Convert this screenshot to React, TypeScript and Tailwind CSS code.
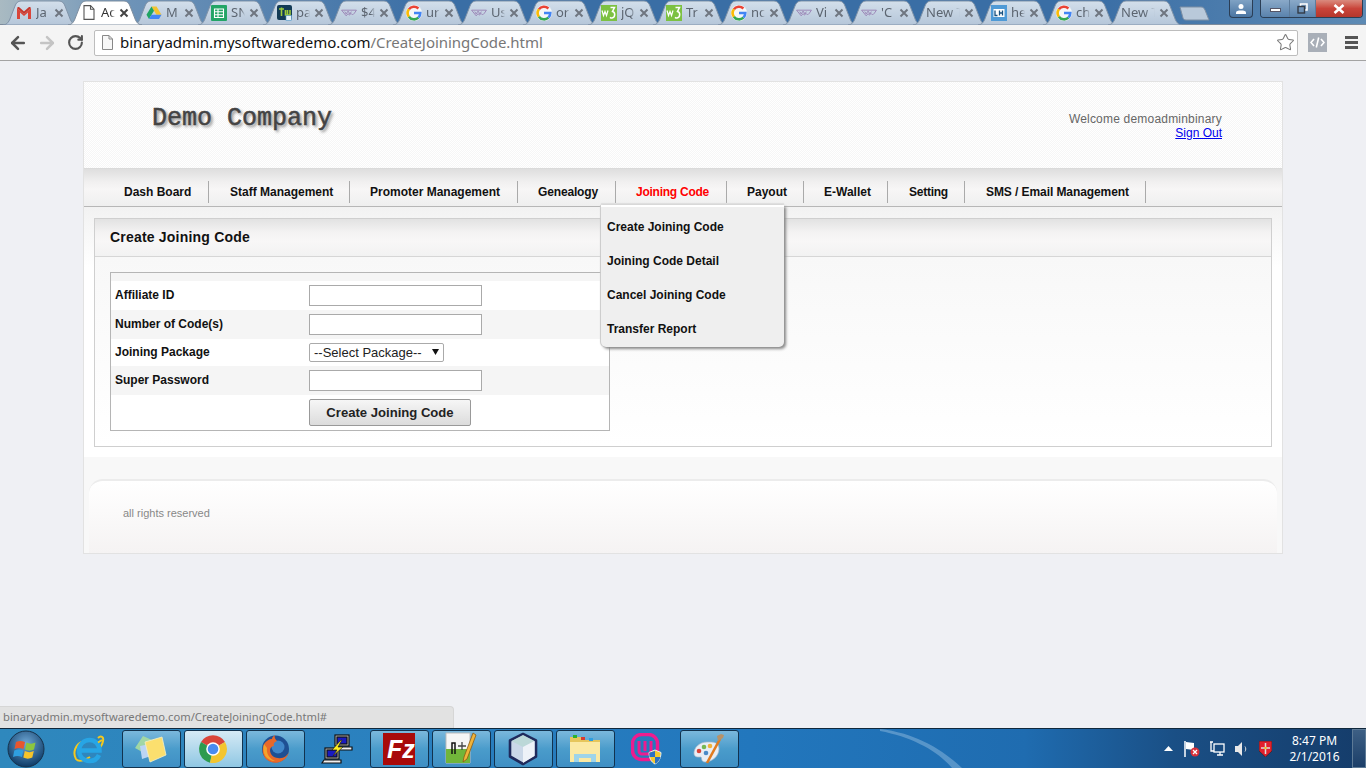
import React from "react";
import { ArrowLeft, ArrowRight, RotateCw, Star } from "lucide-react";

const sans = "font-['Liberation_Sans',Arial,sans-serif]";
const ui = "font-['Noto_Sans',sans-serif]";

// favicons of the browser tabs
function Favicon({ kind }: { kind: string }) {
  if (kind === "gmail")
    return (
      <svg width="16" height="14" viewBox="0 0 16 14">
        <path d="M1 13V2l7 6 7-6v11h-3V6.500L8 10 4 6.500V13z" fill="#d9453a" />
        <path d="M1 2l1-1h1l5 4.500L13 1h1l1 1-7 6z" fill="#c5352b" />
      </svg>
    );
  if (kind === "doc")
    return (
      <svg width="12" height="15" viewBox="0 0 12 15" fill="#fff" stroke="#555" strokeWidth="1.100">
        <path d="M1 .6h6.500L11 4.200v10.200H1z" />
        <path d="M7.500.6v3.600H11" fill="none" />
      </svg>
    );
  if (kind === "drive")
    return (
      <svg width="17" height="15" viewBox="0 0 17 15">
        <path d="M5.800 1h5.400l5.300 9h-5.400z" fill="#f4c32e" />
        <path d="M5.800 1l2.700 4.600L3.200 14.500.5 10z" fill="#1fa463" />
        <path d="M3.200 14.500l2.700-4.500h10.600l-2.700 4.500z" fill="#4286f5" />
      </svg>
    );
  if (kind === "sheets")
    return (
      <svg width="16" height="16" viewBox="0 0 16 16">
        <rect width="16" height="16" rx="1" fill="#23a566" />
        <path d="M3.500 4h9v8.500h-9zM3.500 6.800h9M3.500 9.700h9M7 4v8.500" fill="none" stroke="#fff" strokeWidth="1.100" />
      </svg>
    );
  if (kind === "tw")
    return (
      <svg width="15" height="16" viewBox="0 0 15 16">
        <rect width="15" height="15" rx="2" fill="#123a55" />
        <path d="M2 4h5M4.500 2.500V11M8.500 5v5h2V5m0 5h2.500V5" fill="none" stroke="#9ccb3b" strokeWidth="1.600" />
        <rect x="9" y="10.500" width="5.500" height="5" fill="#e8f3f8" stroke="#4b93c4" strokeWidth=".6" />
      </svg>
    );
  if (kind === "woo")
    return (
      <svg width="17" height="8" viewBox="0 0 17 8" fill="none" stroke="#9a83b5" strokeWidth="1">
        <path d="M.6 1h15.800L14 4.500c-1 1.500-2.500 1.500-3.500 0-1 2-2 2-3 .2L5.500 7 .6 1z" />
        <path d="M4 2.500l1.500 2.500 2-3 2 3 1.500-2.500" />
      </svg>
    );
  if (kind === "google")
    return (
      <svg width="16" height="16" viewBox="0 0 16 16" fill="none" strokeWidth="2.600">
        <circle cx="8" cy="8" r="8" fill="#f4f6f8" stroke="none" />
        <path d="M12.400 3.500A6.300 6.300 0 0 0 2.900 4.300" stroke="#ea4335" />
        <path d="M2.900 4.300a6.300 6.300 0 0 0 0 7.400" stroke="#fbbc05" />
        <path d="M2.900 11.700a6.300 6.300 0 0 0 9.500.9" stroke="#34a853" />
        <path d="M12.400 12.600A6.300 6.300 0 0 0 14.300 8H8" stroke="#4285f4" />
      </svg>
    );
  if (kind === "w3")
    return (
      <svg width="16" height="16" viewBox="0 0 16 16">
        <rect width="16" height="16" fill="#7cc142" />
        <path d="M1 5.500l1.500 5 1.500-4 1.500 4 1.500-5" fill="none" stroke="#fff" strokeWidth="1.200" />
        <path d="M9.500 2.500h4l-2 4c3 .5 3 6-.5 6.500-1 0-1.500-.3-2-.7" fill="none" stroke="#fff" strokeWidth="1.500" />
      </svg>
    );
  if (kind === "lh")
    return (
      <svg width="16" height="16" viewBox="0 0 16 16">
        <rect width="16" height="16" fill="#4f9ad6" />
        <rect x="2.500" y="4" width="11" height="8" fill="#fff" />
        <path d="M4 5.500V10.500H6.500M8.500 5.500v5M11.500 5.500v5M8.500 8h3" fill="none" stroke="#17507f" strokeWidth="1.300" />
      </svg>
    );
  return null;
}

const tabs = [
  { icon: "gmail", label: "Ja" },
  { icon: "doc", label: "Ac", active: true },
  { icon: "drive", label: "M" },
  { icon: "sheets", label: "SN" },
  { icon: "tw", label: "pa" },
  { icon: "woo", label: "$4" },
  { icon: "google", label: "ur" },
  { icon: "woo", label: "Us" },
  { icon: "google", label: "or" },
  { icon: "w3", label: "jQ" },
  { icon: "w3", label: "Tr" },
  { icon: "google", label: "nc" },
  { icon: "woo", label: "Vi" },
  { icon: "woo", label: "'C" },
  { icon: "", label: "New T" },
  { icon: "lh", label: "he" },
  { icon: "google", label: "ch" },
  { icon: "", label: "New T" },
];

function BrowserTab({ icon, label, active }: { icon: string; label: string; active?: boolean }) {
  return (
    <div className={`relative h-[24px] w-[74px] shrink-0 -mr-[9px] ${active ? "z-10" : ""}`}>
      <svg className="absolute inset-0" width="74" height="25" viewBox="0 0 74 25">
        <defs>
          <linearGradient id="tabFill" x1="0" y1="0" x2="0" y2="1">
            <stop offset="0" stopColor="#d3dfeb" />
            <stop offset="1" stopColor="#b5c6d9" />
          </linearGradient>
        </defs>
        <path
          d="M0 25C3 25 5 23 6.500 20L12 6C13 3 15 1 18 1H56C59 1 61 3 62 6L67.500 20C69 23 71 25 74 25Z"
          fill={active ? "#ffffff" : "url(#tabFill)"}
          stroke={active ? "#7f8fa0" : "#8093a8"}
        />
      </svg>
      <div className="relative flex h-full items-center pt-[1px]">
        {icon ? (
          <span className="flex w-[26px] shrink-0 justify-end">
            <span className="flex w-[16px] translate-x-[3px] justify-center">
              <Favicon kind={icon} />
            </span>
          </span>
        ) : (
          <span className="w-[13px] shrink-0" />
        )}
        <span
          className={`${icon ? "ml-[7px] w-[14px]" : "w-[34px]"} overflow-hidden whitespace-nowrap text-[13px] [mask-image:linear-gradient(90deg,#000_70%,transparent)] ${
            active ? "text-[#333]" : "text-[#5c6570]"
          } ${ui}`}
        >
          {label}
        </span>
        <svg className="absolute left-[51px] top-[8px]" width="10" height="10" viewBox="0 0 10 10">
          <path d="M1.500 1.500l7 7m0-7l-7 7" stroke={active ? "#444" : "#6f7680"} strokeWidth="2" />
        </svg>
      </div>
    </div>
  );
}

function WindowControls() {
  return (
    <div className="flex items-start pr-[3px]">
      <div className="mr-[7px] flex h-[18px] w-[24px] items-center justify-center rounded-b-[4px] border border-t-0 border-[#2b3e55] bg-gradient-to-b from-[#7fa2c4] to-[#4a75a2]">
        <svg width="12" height="12" viewBox="0 0 12 12" fill="#fff">
          <circle cx="6" cy="3.500" r="2.500" />
          <path d="M1 11V9.500C1 8 3 7.500 6 7.500s5 .5 5 2V11z" />
        </svg>
      </div>
      <div className="flex h-[18px] overflow-hidden rounded-b-[4px] border border-t-0 border-[#2b3e55]">
        <div className="flex w-[29px] items-center justify-center border-r border-[#5d7c9c] bg-gradient-to-b from-[#8aa9c8] to-[#5a83ad]">
          <div className="mt-[3px] h-[4px] w-[11px] border border-[#556] bg-white" />
        </div>
        <div className="flex w-[26px] items-center justify-center border-r border-[#5d7c9c] bg-gradient-to-b from-[#8aa9c8] to-[#5a83ad]">
          <svg width="11" height="11" viewBox="0 0 11 11" fill="none" stroke="#fff" strokeWidth="1.600">
            <path d="M3.500 3V1h6.500v6H8" />
            <rect x="1" y="3.500" width="6.500" height="6.500" stroke="#333b47" strokeWidth="1.400" />
          </svg>
        </div>
        <div className="flex w-[46px] items-center justify-center bg-gradient-to-b from-[#d98a7e] via-[#c9443a] to-[#b5372c]">
          <svg width="12" height="10" viewBox="0 0 12 10">
            <path d="M1.500 1l9 8m0-8l-9 8" stroke="#fff" strokeWidth="2.600" />
          </svg>
        </div>
      </div>
    </div>
  );
}

function BrowserChrome() {
  return (
    <div className="shrink-0">
      <div className="flex h-[25px] border-b border-[#7d8b9b] bg-[linear-gradient(90deg,#a9bac2_0%,#6f94b8_9%,#3a6ea5_32%,#3a6ea5_80%,#5d8ab4_100%)]">
        <div className="flex pl-[3px]">
          {tabs.map((t, i) => (
            <BrowserTab key={i} icon={t.icon} label={t.label} active={t.active} />
          ))}
        </div>
        <svg className="ml-[6px] mt-[6px] shrink-0" width="31" height="15" viewBox="0 0 31 15">
          <path d="M1 1H22C24 1 25 2 26 4L30 14H7C5 14 4.500 13 4 12z" fill="#b9c9da" stroke="#7d8fa4" />
        </svg>
        <div className="flex-1" />
        <WindowControls />
      </div>
      <div className="flex h-[36px] items-center border-b border-[#a3a3a3] bg-[#f4f4f4] pl-[3px]">
        <div className="flex w-[29px] justify-center">
          <ArrowLeft size={20} strokeWidth={3} color="#555" />
        </div>
        <div className="flex w-[29px] justify-center">
          <ArrowRight size={20} strokeWidth={3} color="#c4c4c4" />
        </div>
        <div className="flex w-[29px] justify-center">
          <RotateCw size={17} strokeWidth={3} color="#555" />
        </div>
        <div className="ml-[4px] flex h-[26px] w-[1204px] items-center rounded-[2px] border border-[#bdbdbd] bg-white pl-[7px] pr-[2px]">
          <svg width="11" height="15" viewBox="0 0 11 15" fill="#f7f7f7" stroke="#888">
            <path d="M.5.500h6.500L10.500 4v10.500H.5z" />
            <path d="M7 .5V4h3.500" fill="none" />
          </svg>
          <span className={`ml-[7px] text-[15px] leading-none tracking-[-0.04px] text-[#111] ${ui}`}>
            binaryadmin.mysoftwaredemo.com<span className="text-[#777]">/CreateJoiningCode.html</span>
          </span>
          <Star size={19} strokeWidth={1.300} color="#777" className="ml-auto" />
        </div>
        <div className="ml-[10px] flex h-[19px] w-[19px] items-center justify-center bg-[#a9afb8]">
          <svg width="15" height="11" viewBox="0 0 15 11" fill="none" stroke="#fff" strokeWidth="1.600">
            <path d="M4 2L1 5.500 4 9M11 2l3 3.500L11 9M8.700 .5L6.300 10.500" />
          </svg>
        </div>
        <div className="ml-[18px] flex w-[13px] flex-col gap-[2px]">
          <div className="h-[3px] bg-[#555]" />
          <div className="h-[3px] bg-[#555]" />
          <div className="h-[3px] bg-[#555]" />
        </div>
      </div>
    </div>
  );
}

const navItems = [
  { label: "Dash Board", box: "w-[106px] pl-[21px]" },
  { label: "Staff Management", box: "w-[141px] pl-[21px]" },
  { label: "Promoter Management", box: "w-[168px] pl-[20px]" },
  { label: "Genealogy", box: "w-[98px] pl-[20px] tracking-[-0.15px]" },
  { label: "Joining Code", box: "w-[111px] pl-[20px] tracking-[-0.25px]" },
  { label: "Payout", box: "w-[77px] pl-[20px]" },
  { label: "E-Wallet", box: "w-[84px] pl-[20px]" },
  { label: "Setting", box: "w-[77px] pl-[21px] tracking-[-0.25px]" },
  { label: "SMS / Email Management", box: "w-[181px] pl-[21px] tracking-[-0.08px]" },
];

const joiningMenu = ["Create Joining Code", "Joining Code Detail", "Cancel Joining Code", "Transfer Report"];

function NavBar() {
  return (
    <div className="flex h-[38px] items-end border-b border-[#b7b7b7] bg-[linear-gradient(180deg,#dedede_0%,#f1f0f0_35%,#f7f6f6_55%,#efefef_100%)] pb-[3px] pl-[19px]">
      {navItems.map((item) => (
        <div
          key={item.label}
          className={`relative flex h-[22px] items-center whitespace-nowrap border-r border-[#aaa] text-[12px] font-bold ${item.box} ${
            item.label === "Joining Code" ? "text-[#f00]" : "text-[#111]"
          }`}
        >
          {item.label}
          {item.label === "Joining Code" && <JoiningDropdown />}
        </div>
      ))}
    </div>
  );
}

function JoiningDropdown() {
  return (
    <div className="absolute left-[-15px] top-[24px] z-20 flex h-[142px] w-[183px] flex-col rounded-b-[5px] border-t-2 border-white bg-[#efefef] pt-[3px] tracking-normal text-[#111] shadow-[2px_2px_3px_#888,-1px_0_1px_#ccc,0_-2px_1px_#ddd]">
      {joiningMenu.map((m) => (
        <div key={m} className="flex h-[34px] items-center pl-[6px]">
          {m}
        </div>
      ))}
    </div>
  );
}

function FormRow({ label, shaded, children }: { label: string; shaded?: boolean; children: React.ReactNode }) {
  return (
    <div className={`flex h-[29px] items-center ${shaded ? "bg-[#f5f5f5]" : "bg-white"}`}>
      <div className="w-[198px] pb-[2px] pl-[4px] text-[12px] font-bold text-[#111]">{label}</div>
      {children}
    </div>
  );
}

function TextBox() {
  return <input className="h-[21px] w-[173px] border border-[#aaa] bg-white" />;
}

function JoiningForm() {
  return (
    <div className="w-[500px] border border-[#b5b5b5] bg-white">
      <div className="h-[8px] bg-[#f5f5f5]" />
      <FormRow label="Affiliate ID">
        <TextBox />
      </FormRow>
      <FormRow label="Number of Code(s)" shaded>
        <TextBox />
      </FormRow>
      <div className="flex h-[27px] items-center bg-white">
        <div className="w-[198px] pb-[2px] pl-[4px] text-[12px] font-bold text-[#111]">Joining Package</div>
        <div className="relative">
          <select className="block h-[19px] w-[135px] appearance-none rounded-[2px] border border-[#aaa] bg-white py-0 pl-[4px] text-[13px] leading-[17px] text-[#222]">
            <option>--Select Package--</option>
          </select>
          <svg className="absolute right-[5px] top-[6px]" width="7" height="6" viewBox="0 0 7 6">
            <path d="M0 0h7L3.500 6z" fill="#111" />
          </svg>
        </div>
      </div>
      <FormRow label="Super Password" shaded>
        <TextBox />
      </FormRow>
      <div className="flex h-[35px] items-start bg-white pt-[4px]">
        <div className="w-[198px]" />
        <button className="h-[27px] w-[162px] rounded-[2px] border border-[#999] bg-gradient-to-b from-[#f6f6f6] to-[#dcdcdc] text-[13.100px] font-bold text-[#222]">
          Create Joining Code
        </button>
      </div>
    </div>
  );
}

function Panel() {
  return (
    <div className="border border-[#cfcfcf] bg-white">
      <div className="flex h-[38px] items-center border-b border-[#d6d6d6] bg-[linear-gradient(180deg,#e2e2e2_0%,#f3f2f2_35%,#f8f7f7_60%,#f2f2f2_100%)] pl-[15px] text-[14px] font-bold tracking-[0.2px] text-[#111]">
        Create Joining Code
      </div>
      <div className="bg-gradient-to-b from-[#f8f8f8] to-white p-[15px]">
        <JoiningForm />
      </div>
    </div>
  );
}

function SitePage() {
  return (
    <div className={`mx-auto h-[473px] w-[1200px] border border-[#e2e2e2] bg-white ${sans}`}>
      <div className="flex h-[87px] items-center justify-between border-b border-[#dadada] bg-[conic-gradient(#f6f6f6_25%,#fff_0_50%,#f6f6f6_0_75%,#fff_0)] bg-[length:2px_2px] pl-[68px] pr-[60px]">
        <div className="pb-[13px] font-['Liberation_Mono',monospace] text-[25px] font-normal leading-none text-[#444] [-webkit-text-stroke:0.5px_#444] [text-shadow:2px_2px_3px_#888]">
          Demo Company
        </div>
        <div className="pt-[2px] text-right text-[12px] leading-[14px] text-[#666]">
          <div className="tracking-[0.2px]">Welcome demoadminbinary</div>
          <a href="#" className="text-[#00e] underline">
            Sign Out
          </a>
        </div>
      </div>
      <NavBar />
      <div className="bg-[linear-gradient(180deg,#f2f2f2_0,#fff_60px)] px-[10px] pb-[10px] pt-[11px]">
        <Panel />
      </div>
      <div className="bg-[#f8f8f8] px-[5px] pt-[22px]">
        <div className="flex h-[74px] items-center rounded-t-[14px] border-t-2 border-[#ececec] bg-gradient-to-b from-white to-[#f5f3f3] pb-[8px] pl-[34px] text-[11px] text-[#888]">
          all rights reserved
        </div>
      </div>
    </div>
  );
}

function StatusBubble() {
  return (
    <div
      className={`absolute bottom-0 left-0 flex h-[22px] w-[454px] items-center rounded-tr-[4px] border-r border-t border-[#d6d6d6] bg-[#e2e2e2] pl-[3px] text-[11.200px] text-[#777] ${ui}`}
    >
      binaryadmin.mysoftwaredemo.com/CreateJoiningCode.html#
    </div>
  );
}

// taskbar program icons
function TaskIcon({ kind }: { kind: string }) {
  switch (kind) {
    case "orb":
      return (
        <svg width="38" height="38" viewBox="0 0 38 38">
          <defs>
            <radialGradient id="orb" cx="50%" cy="35%" r="65%">
              <stop offset="0" stopColor="#6fa8d6" />
              <stop offset="1" stopColor="#0c3a66" />
            </radialGradient>
          </defs>
          <circle cx="19" cy="19" r="18" fill="url(#orb)" stroke="#17324b" />
          <path d="M9 12c3-1.500 6-1.500 9 0l-1.500 7c-3-1.500-6-1.500-9 0z" fill="#e8562d" />
          <path d="M19.500 12.500c3 1.500 6 1.500 9 0l-1.500 7c-3 1.500-6 1.500-9 0z" fill="#8cc63e" />
          <path d="M7.300 20.500c3-1.500 6-1.500 9 0L15 27c-3-1.500-6-1.500-9 0z" fill="#2f9fe0" />
          <path d="M17.800 21c3 1.500 6 1.500 9 0L25.300 27.500c-3 1.500-6 1.500-9 0z" fill="#f6c42a" />
        </svg>
      );
    case "ie":
      return (
        <svg width="32" height="32" viewBox="0 0 32 32" fill="none">
          <path d="M9 9a12 12 0 0 0-6 17c3 4 9 1 14-2M25 5c3-3 6-1 5 3-.5 3-3 7-6 10" stroke="#f3c81f" strokeWidth="2" />
          <path
            d="M7 17.500h19.500C26.500 11 22 7 16.500 7S6 11.500 6 17.500 10.500 28 16.500 28c4.500 0 8-2.500 9.500-6"
            stroke="#27a5e5"
            strokeWidth="4.500"
          />
          <path d="M25 9.500L29 7" stroke="#f3c81f" strokeWidth="2" />
        </svg>
      );
    case "notes":
      return (
        <svg width="34" height="30" viewBox="0 0 34 30">
          <path d="M1 14L9 2l9 4-6 14z" fill="#a8dca0" opacity=".9" />
          <path d="M6 12l10-2 1 12-9 3z" fill="#bcd5f4" />
          <path d="M11 8l17-5 4 18-16 7z" fill="#fbdf6e" stroke="#f4f0c8" strokeWidth=".8" />
        </svg>
      );
    case "chrome":
      return (
        <svg width="30" height="30" viewBox="0 0 30 30">
          <path d="M15 15L3 8A14 14 0 0 1 27 8z" fill="#d9453a" />
          <path d="M15 15L3 8A14 14 0 0 0 12 28.700z" fill="#2d9b4f" />
          <path d="M15 15h14A14 14 0 0 1 12 28.700z" fill="#f3c52f" />
          <path d="M27 8a14 14 0 0 1 2 7H15z" fill="#f3c52f" />
          <circle cx="15" cy="15" r="6.800" fill="#fff" />
          <circle cx="15" cy="15" r="5.300" fill="#4a8bf0" />
        </svg>
      );
    case "firefox":
      return (
        <svg width="30" height="30" viewBox="0 0 30 30">
          <circle cx="15.500" cy="15" r="13.500" fill="#1e4f93" />
          <circle cx="18" cy="13" r="6.500" fill="#3f86c9" />
          <path
            d="M15 1c-2 1-3 3-3 4-3 0-6 2-8 5-2 5-2 10 2 15 4 4 11 5 16 2 4-2 6-6 7-9-2 4-6 7-11 6-5 0-8-4-8-8 0-2 2-4 4-4-1-2 0-4 3-5C15 5 14 3 15 1z"
            fill="#e8682a"
          />
          <path d="M4 10c-1 4-1 9 2 13 2 2 5 4 9 4-5-2-9-7-8-13z" fill="#f4a32c" />
        </svg>
      );
    case "putty":
      return (
        <svg width="32" height="32" viewBox="0 0 32 32">
          <g stroke="#111" strokeWidth="1.200">
            <rect x="14" y="2" width="14" height="11" fill="#c9c9c9" />
            <rect x="16" y="4" width="10" height="7" fill="#1a1ac0" />
            <path d="M17 14h14v3H14z" fill="#eee" />
            <rect x="4" y="15" width="14" height="11" fill="#c9c9c9" />
            <rect x="6" y="17" width="10" height="7" fill="#1a1ac0" />
            <path d="M3 27h17v3H1z" fill="#eee" />
          </g>
          <path d="M20 7l-9 10h5l-4 6 10-9h-5l4-7z" fill="#ffee20" stroke="#222" strokeWidth=".7" />
        </svg>
      );
    case "filezilla":
      return (
        <svg width="32" height="32" viewBox="0 0 32 32">
          <rect width="32" height="32" fill="#a80a0a" />
          <text x="4" y="25" fill="#fff" fontSize="25" fontWeight="700" fontStyle="italic" fontFamily="Liberation Sans">
            Fz
          </text>
        </svg>
      );
    case "notepad":
      return (
        <svg width="34" height="34" viewBox="0 0 34 34">
          <path d="M2 1h24v30H2z" fill="#f5f5f5" stroke="#bbb" />
          <path d="M2 17h24v14H2z" fill="#71b53a" />
          <path d="M8 22V11h3v11" fill="none" stroke="#111" strokeWidth="1.500" />
          <path d="M14 14h8M18 10v8" stroke="#444" strokeWidth="1.300" />
          <path d="M32 3l-9 24-4 3 1-5 9-24z" fill="#f0b33a" stroke="#8b5a10" strokeWidth=".8" />
        </svg>
      );
    case "box":
      return (
        <svg width="32" height="34" viewBox="0 0 32 34">
          <path d="M16 2l13 6.500v16L16 32 3 24.500v-16z" fill="#cbd8e8" stroke="#1f2a5c" strokeWidth="2.600" strokeLinejoin="round" />
          <path d="M4.500 9L16 15l11.500-6L16 3z" fill="#bcd8d8" />
          <path d="M16 15v16l11.500-7V9z" fill="#eef2f8" />
        </svg>
      );
    case "folder":
      return (
        <svg width="32" height="30" viewBox="0 0 32 30">
          <path d="M1 3h12l2 3h16v21H1z" fill="#e6c65c" />
          <path d="M1 8h30v20H1z" fill="#fbe9a4" />
          <rect x="4" y="1" width="4" height="3" fill="#2bb32b" />
          <rect x="12" y="3" width="4" height="3" fill="#d73a30" />
          <rect x="20" y="4" width="4" height="3" fill="#2f9fe0" />
          <path d="M5 28V20h22v8h-5v-4H10v4z" fill="#9ed4ea" />
        </svg>
      );
    case "wamp":
      return (
        <svg width="32" height="32" viewBox="0 0 32 32">
          <rect x="1.500" y="1.500" width="25" height="25" rx="9" fill="none" stroke="#ec1c8f" strokeWidth="3.500" />
          <path d="M8 8v10a3 3 0 0 0 3 3h6a3 3 0 0 0 3-3V8M14 8v10" fill="none" stroke="#ec1c8f" strokeWidth="3" />
          <path d="M24 17l6 2.500c0 5-2 9.500-6 11.500-4-2-6-6.500-6-11.500z" fill="#f5c92e" stroke="#e6edf3" />
          <path d="M24 18v6h-5.500c0-1.500-.2-3-.2-4.300zM24 24h5.500c-.8 3-2.800 5.600-5.500 6.800z" fill="#2a6fc4" />
        </svg>
      );
    case "paint":
      return (
        <svg width="32" height="32" viewBox="0 0 32 32">
          <path d="M14 9C6 9 1 15 1 20s5 4 7 4c1 1 0 5 4 5 7 0 14-6 14-13s-5-7-12-7z" fill="#e8eef5" stroke="#a8b8c8" strokeWidth=".7" />
          <circle cx="6" cy="18" r="2.300" fill="#d9453a" />
          <circle cx="11" cy="14" r="2.300" fill="#76b852" />
          <circle cx="17" cy="13" r="2.300" fill="#f0b33a" />
          <circle cx="13" cy="20" r="2.300" fill="#4a8bc8" />
          <path d="M27 6L14 30" stroke="#e07b20" strokeWidth="2.600" />
          <path d="M25 8l-1-5 4-2 3 1-1 3z" fill="#b79268" />
        </svg>
      );
  }
  return null;
}

const taskSlots = [
  { kind: "notes", framed: true },
  { kind: "chrome", framed: true, active: true },
  { kind: "firefox", framed: true },
  { kind: "putty" },
  { kind: "filezilla", framed: true },
  { kind: "notepad", framed: true },
  { kind: "box", framed: true },
  { kind: "folder", framed: true },
  { kind: "wamp" },
  { kind: "paint", framed: true },
];

function Tray() {
  return (
    <>
      <div className="flex w-[24px] justify-center">
        <svg width="9" height="5" viewBox="0 0 9 5">
          <path d="M0 5l4.500-5L9 5z" fill="#fff" />
        </svg>
      </div>
      <div className="flex w-[25px] justify-center">
        <svg width="17" height="16" viewBox="0 0 17 16">
          <path d="M1 0v16" stroke="#fff" strokeWidth="1.500" />
          <path d="M2 1l8 1v7l-8-1z" fill="#fff" />
          <circle cx="11" cy="11" r="4.500" fill="#d8303a" />
          <path d="M9 9l4 4m0-4l-4 4" stroke="#fff" strokeWidth="1.300" />
        </svg>
      </div>
      <div className="flex w-[24px] justify-center">
        <svg width="16" height="16" viewBox="0 0 16 16" fill="none" stroke="#fff" strokeWidth="1.300">
          <rect x="5" y="3" width="10" height="8" />
          <path d="M8 14h6M11 11v3M2 1v9h3M1 1h3" />
        </svg>
      </div>
      <div className="flex w-[24px] justify-center">
        <svg width="13" height="14" viewBox="0 0 13 14">
          <path d="M0 4h3l4-4v14l-4-4H0z" fill="#e8e8e8" />
          <path d="M10 4.500c1 1.500 1 3.500 0 5" stroke="#ddd" fill="none" />
        </svg>
      </div>
      <div className="flex w-[24px] justify-center">
        <svg width="13" height="16" viewBox="0 0 13 16">
          <path d="M0 0h13v10l-6.500 6L0 10z" fill="#e2202c" stroke="#222" strokeWidth=".6" />
          <path d="M6.500 2v11M2 7h9" stroke="#ddd" strokeWidth="1.500" />
          <circle cx="6.500" cy="7" r="1.300" fill="#f0c020" />
        </svg>
      </div>
    </>
  );
}

function Taskbar() {
  return (
    <div
      className={`relative flex h-[40px] shrink-0 items-center overflow-hidden border-t border-[#10283c] bg-[linear-gradient(90deg,#2f88bd_0%,#2a80bf_30%,#2277bd_55%,#1f6cb0_75%,#1a4f85_86%,#153c6a_100%)] ${ui}`}
    >
      <svg className="absolute left-[880px] top-0" width="90" height="39" viewBox="0 0 90 39">
        <path d="M0 0C35 4 62 20 82 39L72 39C58 22 32 8 0 2z" fill="#8db9de" opacity=".5" />
      </svg>
      <div className="relative flex h-full w-[50px] items-center justify-center pl-[1px]">
        <TaskIcon kind="orb" />
      </div>
      <div className="relative flex h-full w-[70px] items-center justify-center pl-[8px]">
        <TaskIcon kind="ie" />
      </div>
      {taskSlots.map((s) => (
        <div key={s.kind} className="relative flex h-full w-[62px] items-center justify-center">
          {s.framed ? (
            <div
              className={`flex h-[38px] w-[59px] items-center justify-center rounded-[3px] border border-[#12334f] ${
                s.active
                  ? "bg-gradient-to-b from-[#d5eaf5] to-[#8fc7e3]"
                  : "bg-gradient-to-b from-[#7ab8dc] via-[#4a9ccb] to-[#3f8fc4]"
              }`}
            >
              <TaskIcon kind={s.kind} />
            </div>
          ) : (
            <TaskIcon kind={s.kind} />
          )}
        </div>
      ))}
      <div className="flex-1" />
      <div className="relative flex h-full items-center">
        <Tray />
        <div className="w-[75px] text-center text-[12px] leading-[16px] text-white">
          <div>8:47 PM</div>
          <div>2/1/2016</div>
        </div>
        <div className="h-full w-[14px] border border-[#5d7a96] bg-gradient-to-b from-[#3d5f84] to-[#1c3f69]" />
      </div>
    </div>
  );
}

export default function App() {
  return (
    <div className="flex h-screen w-full flex-col overflow-hidden bg-[#eff0f4]">
      <BrowserChrome />
      <div className="relative flex-1 pt-[20px]">
        <SitePage />
        <StatusBubble />
      </div>
      <Taskbar />
    </div>
  );
}
